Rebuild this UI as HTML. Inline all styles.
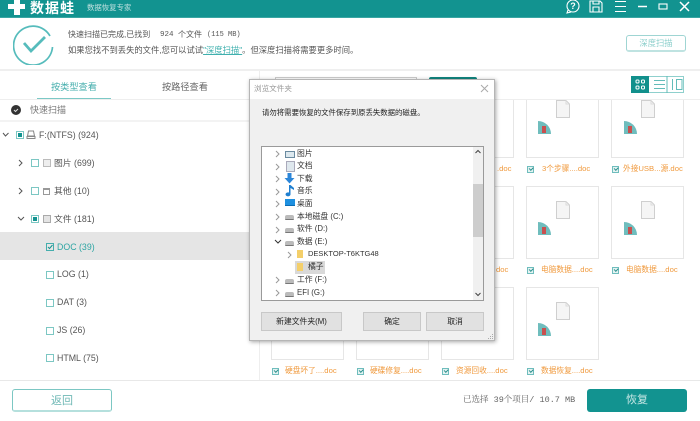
<!DOCTYPE html>
<html lang="zh"><head><meta charset="utf-8"><title>数据蛙</title>
<style>
html,body{margin:0;padding:0;width:700px;height:421px;overflow:hidden;background:#fff}
body{position:relative;font-family:"Liberation Sans","Noto Sans CJK SC",sans-serif;font-size:9px;color:#555;filter:blur(.3px)}
div,span,svg{position:absolute}
.t{white-space:nowrap;line-height:12px;height:12px}
.m{font-family:"Liberation Mono","Noto Serif CJK SC",monospace}
.s{font-family:"Liberation Mono","Noto Serif CJK SC",serif}
.n{font-size:8.8px;color:#555}
.cb{width:6px;height:6px;border:1px solid #7cc7c3;background:#fff}
.cb i{position:absolute;left:1px;top:1px;width:4px;height:4px;background:#139390;display:block}
.card{width:71px;height:71px;border:1px solid #e6e6e6;background:#fff}
.doc{width:14px;height:18px}
.q{width:13px;height:13px;background:#6fbdbd;border-radius:0 13px 0 0}
.q i{position:absolute;left:4px;top:5px;width:4px;height:7px;background:#c9504f;display:block}
.l{color:#f09a3e;font-size:7.7px}
.lc{width:5px;height:5px;border:1px solid #6fbdbd;background:#e4f3f2}
.lc::after{content:"";position:absolute;left:1px;top:0;width:3px;height:1.5px;border-left:1px solid #2a8f8c;border-bottom:1px solid #2a8f8c;transform:rotate(-45deg)}
.d{font-size:7.8px;color:#333}
.dk{width:9px;height:4px;background:#bbb;border-radius:2px 2px 1px 1px;border-bottom:1px solid #777}
.btn{background:#e1e1e1;border:1px solid #c8c8c8;box-sizing:border-box;text-align:center;color:#222;line-height:17px;height:19px;font-size:7.8px}
</style></head><body>

<!-- Header -->
<div style="left:0;top:0;width:700px;height:17px;background:#129390;border-bottom:1px solid #3aa6a3"></div>
<div style="left:8px;top:4px;width:17px;height:5px;background:#fff"></div>
<div style="left:14px;top:0;width:6px;height:15px;background:#fff"></div>
<div class="t" style="left:30px;top:0;color:#fff;font-size:14px;font-weight:700;letter-spacing:1px;line-height:17px;height:17px">数据蛙</div>
<div class="t" style="left:87px;top:1px;color:#bfe0df;font-size:7.4px;line-height:13px">数据恢复专家</div>
<svg style="left:565px;top:0" width="135" height="17" fill="none" stroke="#fff" stroke-width="1.1">
<circle cx="8" cy="6" r="6"/><path d="M3 10L2 13L6 12" /><text x="8" y="9" font-size="9" font-weight="700" text-anchor="middle" fill="#fff" stroke="none" font-family="Liberation Sans">?</text>
<path d="M25 1H35L37 3V12H25ZM28 1V4H34V1M28 12V7H34V12"/>
<path d="M50 1.500H61M50 6.500H61M50 11.500H61"/>
<path d="M73 6.500H82" stroke-width="1.500"/>
<rect x="94" y="4" width="8" height="5"/>
<path d="M115 2L124 11M124 2L115 11" stroke-width="1.500"/>
</svg>

<!-- Status -->
<svg style="left:13px;top:23px" width="42" height="42" fill="none" stroke="#56bcbc" stroke-width="1.700">
<path d="M37 13A19.500 19.500 0 1 0 39.500 24"/>
<path d="M11 20L18 28L32 14" stroke-width="2.800"/>
</svg>
<div class="t" style="left:68px;top:29px;font-size:8px;color:#555">快速扫描已完成,已找到</div>
<div class="t m" style="left:160px;top:29px;font-size:7.500px;color:#555">924</div>
<div class="t" style="left:178px;top:29px;font-size:8px;color:#555">个文件</div>
<div class="t m" style="left:207px;top:29px;font-size:7px;color:#555">(115 MB)</div>
<div class="t" style="left:68px;top:44px;font-size:8.3px;color:#555">如果您找不到丢失的文件,您可以试试<span style="position:static;color:#3fb0ae;text-decoration:underline">"深度扫描"</span>。但深度扫描将需要更多时间。</div>
<div class="t" style="left:626px;top:35px;width:60px;height:17px;line-height:15px;border:1px solid #9fd5d3;border-bottom:2px solid #bfe3e1;border-radius:3px;box-sizing:border-box;text-align:center;color:#8ccfcc;font-size:8.3px">深度扫描</div>
<div style="left:0;top:69px;width:700px;height:2px;background:#efefef"></div>

<!-- Sidebar -->
<div class="t" style="left:51px;top:81px;color:#45aead;font-size:9.200px">按类型查看</div>
<div class="t" style="left:162px;top:81px;color:#666;font-size:9.200px">按路径查看</div>
<div style="left:37px;top:98px;width:74px;height:2px;background:#7cc9c6"></div>
<div style="left:0;top:99px;width:259px;height:1px;background:#eee"></div>
<div style="left:11px;top:105px;width:10px;height:10px;border-radius:50%;background:#333"></div>
<svg style="left:11px;top:105px" width="10" height="10" fill="none" stroke="#ddd"><path d="M3 5L4.500 6.500L7 4"/></svg>
<div class="t" style="left:30px;top:104px;color:#777;font-size:9px">快速扫描</div>
<div style="left:0;top:120px;width:259px;height:2px;background:#f3f3f3"></div>
<div style="left:259px;top:71px;width:1px;height:309px;background:#eee"></div>

<div style="left:0;top:232px;width:250px;height:28px;background:#e5e5e5"></div>

<svg style="left:0;top:125px" width="30" height="120" fill="none" stroke="#555"><path d="M3 8L5.500 11L8.500 8M19 35L22 38L19 41M19 63L22 66L19 69M18 92L21 95L24 92"/></svg>
<div class="cb" style="left:16px;top:131px"><i></i></div>
<svg style="left:26px;top:130px" width="10" height="10" fill="none" stroke="#888"><path d="M2.500 1H7.500L8.500 6H1.500ZM1 6.500H9V8.500H1Z"/></svg>
<div class="t n" style="left:39px;top:129px;color:#555">F:(NTFS) (924)</div>

<div class="cb" style="left:31px;top:159px"></div>
<div style="left:43px;top:159px;width:6px;height:6px;border:1px solid #bbb;background:#eee"></div>
<div class="t n" style="left:54px;top:157px">图片 (699)</div>

<div class="cb" style="left:31px;top:187px"></div>
<div style="left:43px;top:188px;width:5px;height:4px;border:1px solid #999;border-top-width:2px"></div>
<div class="t n" style="left:54px;top:185px">其他 (10)</div>

<div class="cb" style="left:31px;top:215px"><i></i></div>
<div style="left:43px;top:215px;width:6px;height:6px;border:1px solid #aaa;background:#e4e4e4"></div>
<div class="t n" style="left:54px;top:213px">文件 (181)</div>

<div class="cb" style="left:46px;top:243px;background:transparent;border-color:#45aead"></div>
<svg style="left:46px;top:243px" width="8" height="8" fill="none" stroke="#139390"><path d="M2 4L3.500 5.500L6.500 2"/></svg>
<div class="t n" style="left:57px;top:241px;color:#2ea5a3">DOC (39)</div>
<div class="cb" style="left:46px;top:271px"></div><div class="t n" style="left:57px;top:268px">LOG (1)</div>
<div class="cb" style="left:46px;top:299px"></div><div class="t n" style="left:57px;top:296px">DAT (3)</div>
<div class="cb" style="left:46px;top:327px"></div><div class="t n" style="left:57px;top:324px">JS (26)</div>
<div class="cb" style="left:46px;top:354px"></div><div class="t n" style="left:57px;top:352px">HTML (75)</div>

<!-- Toolbar behind dialog -->
<div style="left:275px;top:77px;width:140px;height:10px;border:1px solid #ccc;background:#fff"></div>
<div style="left:429px;top:77px;width:48px;height:10px;background:#11857f;border-radius:2px 2px 0 0"></div>
<div style="left:631px;top:76px;width:53px;height:17px;border:1px solid #8fd0cd;box-sizing:border-box;background:#fff"></div>
<div style="left:631px;top:76px;width:18px;height:17px;background:#11908c"></div>
<svg style="left:631px;top:76px" width="53" height="17" fill="none" stroke="#fff">
<rect x="5" y="4" width="3" height="3" rx="1"/><rect x="10.500" y="4" width="3" height="3" rx="1"/><rect x="5" y="10" width="3" height="3" rx="1"/><rect x="10.500" y="10" width="3" height="3" rx="1"/>
<path d="M23 4.500H34M23 8.500H34M23 12.500H34M36 0V17" stroke="#63bcb9"/>
<path d="M41.500 3V14M45.500 3.500H51V13.500H45.500Z" stroke="#63bcb9"/>
</svg>
<div style="left:260px;top:99px;width:440px;height:1px;background:#eee"></div>

<!-- Cards row 1 -->
<div class="card" style="left:441px;top:85px;clip-path:inset(15px -1px -1px -1px)"></div>
<div class="card" style="left:526px;top:85px;clip-path:inset(15px -1px -1px -1px)"></div>
<div class="card" style="left:611px;top:85px;clip-path:inset(15px -1px -1px -1px)"></div>
<svg class="doc" style="left:556px;top:100px" viewBox="0 0 14 18"><path d="M.5 .5H10L13.500 4V17.500H.5Z" fill="#f5f5f5" stroke="#cfcfcf"/><path d="M10 .5V4H13.500" fill="none" stroke="#dcdcdc"/></svg><div class="q" style="left:538px;top:121px"><i></i></div>
<svg class="doc" style="left:641px;top:100px" viewBox="0 0 14 18"><path d="M.5 .5H10L13.500 4V17.500H.5Z" fill="#f5f5f5" stroke="#cfcfcf"/><path d="M10 .5V4H13.500" fill="none" stroke="#dcdcdc"/></svg><div class="q" style="left:624px;top:121px"><i></i></div>

<div class="lc" style="left:527px;top:166px"></div><div class="t l" style="left:542px;top:163px">3个步骤....doc</div>
<div class="lc" style="left:612px;top:166px"></div><div class="t l" style="left:623px;top:163px">外接USB...源.doc</div>
<div class="t l" style="left:497px;top:163px">.doc</div>

<!-- Row 2 -->
<div class="card" style="left:441px;top:186px"></div>
<div class="card" style="left:526px;top:186px"></div>
<div class="card" style="left:611px;top:186px"></div>
<svg class="doc" style="left:556px;top:201px" viewBox="0 0 14 18"><path d="M.5 .5H10L13.500 4V17.500H.5Z" fill="#f5f5f5" stroke="#cfcfcf"/><path d="M10 .5V4H13.500" fill="none" stroke="#dcdcdc"/></svg><div class="q" style="left:538px;top:222px"><i></i></div>
<svg class="doc" style="left:641px;top:201px" viewBox="0 0 14 18"><path d="M.5 .5H10L13.500 4V17.500H.5Z" fill="#f5f5f5" stroke="#cfcfcf"/><path d="M10 .5V4H13.500" fill="none" stroke="#dcdcdc"/></svg><div class="q" style="left:624px;top:222px"><i></i></div>
<div class="lc" style="left:527px;top:267px"></div><div class="t l" style="left:541px;top:264px">电脑数据....doc</div>
<div class="lc" style="left:612px;top:267px"></div><div class="t l" style="left:626px;top:264px">电脑数据....doc</div>
<div class="t l" style="left:496px;top:264px">doc</div>

<!-- Row 3 -->
<div class="card" style="left:271px;top:287px"></div>
<div class="card" style="left:356px;top:287px"></div>
<div class="card" style="left:441px;top:287px"></div>
<div class="card" style="left:526px;top:287px"></div>
<svg class="doc" style="left:556px;top:302px" viewBox="0 0 14 18"><path d="M.5 .5H10L13.500 4V17.500H.5Z" fill="#f5f5f5" stroke="#cfcfcf"/><path d="M10 .5V4H13.500" fill="none" stroke="#dcdcdc"/></svg><div class="q" style="left:538px;top:323px"><i></i></div>
<div class="lc" style="left:272px;top:368px"></div><div class="t l" style="left:285px;top:365px">硬盘坏了....doc</div>
<div class="lc" style="left:357px;top:368px"></div><div class="t l" style="left:370px;top:365px">硬碟修复....doc</div>
<div class="lc" style="left:442px;top:368px"></div><div class="t l" style="left:456px;top:365px">资源回收....doc</div>
<div class="lc" style="left:527px;top:368px"></div><div class="t l" style="left:541px;top:365px">数据恢复....doc</div>

<!-- Footer -->
<div style="left:0;top:380px;width:700px;height:1px;background:#e8e8e8"></div>
<div class="t" style="left:12px;top:389px;width:100px;height:23px;line-height:22px;border:1px solid #7cc7c3;border-bottom:2px solid #b5e0dd;border-radius:3px;box-sizing:border-box;text-align:center;color:#6fb8b5;font-size:11px">返回</div>
<div class="t s" style="left:463px;top:394px;font-size:8.500px;color:#666">已选择 39个项目/ 10.7 MB</div>
<div class="t" style="left:587px;top:389px;width:100px;height:23px;line-height:23px;background:#129390;border-radius:3px;text-align:center;color:#c9e8e6;font-size:11px">恢复</div>

<!-- Dialog -->
<div style="left:249px;top:79px;width:246px;height:262px;background:#f0f0f0;border:1px solid #b5b5b5;box-sizing:border-box;box-shadow:1px 1px 4px rgba(0,0,0,.35)"></div>
<div style="left:250px;top:80px;width:244px;height:19px;background:#fff"></div>
<div class="t" style="left:254px;top:83px;font-size:7.600px;color:#999">浏览文件夹</div>
<svg style="left:480px;top:84px" width="9" height="9" stroke="#aaa" fill="none"><path d="M1 1L8 8M8 1L1 8"/></svg>
<div class="t" style="left:262px;top:107px;font-size:7.400px;color:#222">请勿将需要恢复的文件保存到原丢失数据的磁盘。</div>

<div style="left:261px;top:146px;width:223px;height:155px;background:#fff;border:1px solid #9a9a9a;box-sizing:border-box"></div>
<div style="left:473px;top:147px;width:10px;height:153px;background:#f0f0f0"></div>
<div style="left:473px;top:184px;width:10px;height:53px;background:#cdcdcd"></div>
<svg style="left:473px;top:147px" width="10" height="153" fill="none" stroke="#444"><path d="M2.500 6L5 3.500L7.500 6M2.500 146L5 148.500L7.500 146"/></svg>

<svg style="left:272px;top:148px" width="30" height="150" fill="none" stroke="#999">
<path d="M4 3L7 6L4 9M4 16L7 19L4 22M4 28L7 31L4 34M4 41L7 44L4 47M4 53L7 56L4 59M4 66L7 69L4 72M4 79L7 82L4 85M4 129L7 132L4 135M4 142L7 145L4 148M16 104L19 107L16 110"/>
<path d="M3 92L6 95L9 92" stroke="#333"/>
</svg>
<div style="left:285px;top:151px;width:8px;height:5px;background:#dce8ee;border:1px solid #6a8aa0"></div>
<div style="left:286px;top:161px;width:7px;height:9px;background:#dfe8ee;border:1px solid #aab"></div>
<svg style="left:284px;top:173px" width="11" height="11"><path d="M3.500 0H7.500V5H10.500L5.500 10.500L.5 5H3.500Z" fill="#2c86d8"/></svg>
<svg style="left:284px;top:185px" width="11" height="12"><path d="M5 0H6.500V9A2.500 2 0 1 1 5 7.500ZM6.500 0L10 3V5L6.500 3Z" fill="#1f7fd0"/></svg>
<div style="left:285px;top:199px;width:10px;height:6px;background:#1e90e0;border-bottom:1px solid #0b6cb4"></div>
<div class="dk" style="left:285px;top:215px"></div>
<div class="dk" style="left:285px;top:228px"></div>
<div class="dk" style="left:285px;top:241px"></div>
<div class="dk" style="left:285px;top:279px"></div>
<div class="dk" style="left:285px;top:292px"></div>
<div style="left:297px;top:250px;width:6px;height:8px;background:#f4cf6a"></div>
<div style="left:295px;top:261px;width:30px;height:13px;background:#d9d9d9"></div>
<div style="left:297px;top:263px;width:6px;height:8px;background:#f4cf6a"></div>

<div class="t d" style="left:297px;top:148px">图片</div>
<div class="t d" style="left:297px;top:160px">文档</div>
<div class="t d" style="left:297px;top:173px">下载</div>
<div class="t d" style="left:297px;top:185px">音乐</div>
<div class="t d" style="left:297px;top:198px">桌面</div>
<div class="t d" style="left:297px;top:211px">本地磁盘 (C:)</div>
<div class="t d" style="left:297px;top:223px">软件 (D:)</div>
<div class="t d" style="left:297px;top:236px">数据 (E:)</div>
<div class="t d" style="left:308px;top:248px;font-size:7.500px">DESKTOP-T6KTG48</div>
<div class="t d" style="left:308px;top:261px">橘子</div>
<div class="t d" style="left:297px;top:274px">工作 (F:)</div>
<div class="t d" style="left:297px;top:287px">EFI (G:)</div>

<div class="btn" style="left:261px;top:312px;width:81px">新建文件夹(M)</div>
<div class="btn" style="left:363px;top:312px;width:58px">确定</div>
<div class="btn" style="left:426px;top:312px;width:58px">取消</div>
<svg style="left:488px;top:334px" width="6" height="6" fill="#aaa"><rect x="4" y="0" width="1" height="1"/><rect x="2" y="2" width="1" height="1"/><rect x="4" y="2" width="1" height="1"/><rect x="0" y="4" width="1" height="1"/><rect x="2" y="4" width="1" height="1"/><rect x="4" y="4" width="1" height="1"/></svg>
</body></html>
